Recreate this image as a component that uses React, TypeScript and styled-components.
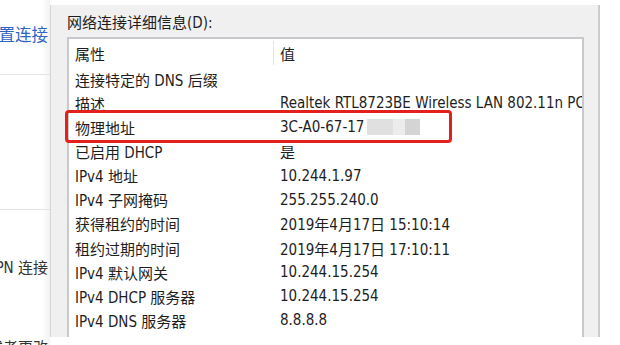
import React from "react";
import styled, { createGlobalStyle } from "styled-components";

const GlobalStyle = createGlobalStyle`
  html, body {
    margin: 0;
    padding: 0;
    width: 620px;
    height: 345px;
    overflow: hidden;
    background: #ffffff;
  }
  * { box-sizing: border-box; }
  body {
    font-family: "DejaVu Sans Condensed", "Noto Sans CJK SC", sans-serif;
    color: #1e1e1e;
  }
`;

const Page = styled.div`
  display: flex;
  width: 620px;
  height: 345px;
  overflow: hidden;
`;

const LeftPane = styled.div`
  width: 50px;
  flex: none;
  display: flex;
  flex-direction: column;
  overflow: hidden;
  background: linear-gradient(to right, #ffffff 85%, #f2f2f2 100%);
`;

const Section = styled.div<{ $h: number; $line?: boolean }>`
  height: ${(p) => p.$h}px;
  flex: none;
  display: flex;
  align-items: center;
  justify-content: flex-end;
  white-space: nowrap;
  overflow: hidden;
  padding-right: 2px;
  border-bottom: ${(p) => (p.$line ? "1px solid #e4e4e4" : "none")};
`;

const BlueLink = styled.span`
  font-family: "Noto Sans CJK SC", sans-serif;
  font-size: 16.5px;
  color: #2f64c4;
  margin-bottom: 6px;
`;

const SideText = styled.span<{ $shift?: number }>`
  font-size: 15px;
  color: #333;
  margin-top: ${(p) => p.$shift || 0}px;
`;

const Dialog = styled.div`
  margin-top: 5px;
  width: 550px;
  height: 332px;
  flex: none;
  background: #f0f0f0;
  border-left: 1px solid #d6d6d6;
  border-right: 2px solid #cccccc;
  padding: 8px 0 0 16px;
  display: flex;
  flex-direction: column;
`;

const Label = styled.div`
  font-size: 15px;
  line-height: 20px;
  margin-bottom: 4px;
`;

const ListBox = styled.div`
  position: relative;
  width: 517px;
  flex: 1;
  background: #ffffff;
  border: 2px solid #c8c8ce;
  border-bottom: none;
`;

const Row = styled.div<{ $header?: boolean }>`
  display: grid;
  grid-template-columns: 205px 1fr;
  height: ${(p) => (p.$header ? 28 : 24.15)}px;
  align-items: center;
  font-size: 15px;
`;

const Cell = styled.div<{ $sep?: boolean }>`
  padding-left: 6px;
  white-space: nowrap;
  overflow: hidden;
  height: 100%;
  display: flex;
  align-items: center;
  border-right: ${(p) => (p.$sep ? "1px solid #e6e6e6" : "none")};
`;

const HeaderCell = styled(Cell)`
  height: 24px;
`;

const Mask = styled.span<{ $w: number; $c: string }>`
  display: inline-block;
  width: ${(p) => p.$w}px;
  height: 16px;
  background: ${(p) => p.$c};
  vertical-align: middle;
`;

const MaskGroup = styled.span`
  display: inline-flex;
  margin-left: 3px;
`;

const Highlight = styled.div`
  position: absolute;
  left: -4px;
  top: 71px;
  width: 387px;
  height: 33px;
  border: 3px solid #e3201c;
  border-radius: 4px;
  pointer-events: none;
`;

const rows: [string, React.ReactNode][] = [
  ["连接特定的 DNS 后缀", ""],
  ["描述", "Realtek RTL8723BE Wireless LAN 802.11n PCIe Adapter"],
  [
    "物理地址",
    <>
      3C-A0-67-17
      <MaskGroup>
        <Mask $w={26} $c="#e0e0e0" />
        <Mask $w={12} $c="#ececec" />
        <Mask $w={15} $c="#d4d4d4" />
      </MaskGroup>
    </>,
  ],
  ["已启用 DHCP", "是"],
  ["IPv4 地址", "10.244.1.97"],
  ["IPv4 子网掩码", "255.255.240.0"],
  ["获得租约的时间", "2019年4月17日 15:10:14"],
  ["租约过期的时间", "2019年4月17日 17:10:11"],
  ["IPv4 默认网关", "10.244.15.254"],
  ["IPv4 DHCP 服务器", "10.244.15.254"],
  ["IPv4 DNS 服务器", "8.8.8.8"],
];

export default function App() {
  return (
    <>
      <GlobalStyle />
      <Page>
        <LeftPane>
          <Section $h={75} $line>
            <BlueLink>设置连接</BlueLink>
          </Section>
          <Section $h={135} $line />
          <Section $h={115}>
            <SideText $shift={-2}>VPN 连接</SideText>
          </Section>
          <Section $h={20}>
            <SideText $shift={22}>或者更改</SideText>
          </Section>
        </LeftPane>
        <Dialog>
          <Label>网络连接详细信息(D):</Label>
          <ListBox>
            <Row $header>
              <HeaderCell $sep>属性</HeaderCell>
              <HeaderCell>值</HeaderCell>
            </Row>
            {rows.map(([k, v], i) => (
              <Row key={i}>
                <Cell>{k}</Cell>
                <Cell>{v}</Cell>
              </Row>
            ))}
            <Highlight />
          </ListBox>
        </Dialog>
      </Page>
    </>
  );
}
